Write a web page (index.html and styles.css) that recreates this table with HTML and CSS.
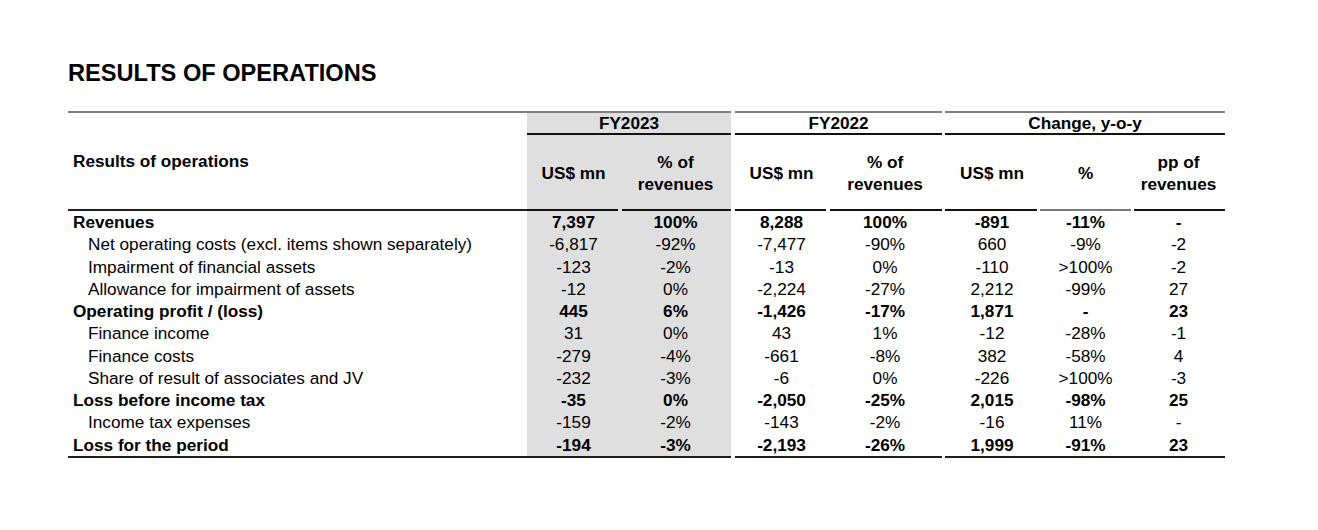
FILE: index.html
```html
<!DOCTYPE html>
<html lang="en">
<head>
<meta charset="utf-8">
<title>Results of operations</title>
<link rel="stylesheet" href="styles.css">
</head>
<body>
<main class="page">
  <h1 class="title">RESULTS OF OPERATIONS</h1>
  <table class="ops">
    <colgroup>
      <col class="w-label">
      <col class="w-93">
      <col class="w-111">
      <col class="w-4">
      <col class="w-93">
      <col class="w-114">
      <col class="w-3">
      <col class="w-94">
      <col class="w-93">
      <col class="w-93">
    </colgroup>
    <thead>
      <tr class="row-group">
        <th class="label-head" rowspan="2">Results of operations</th>
        <th class="group shade" colspan="2">FY2023</th>
        <th class="spacer" rowspan="2"></th>
        <th class="group" colspan="2">FY2022</th>
        <th class="spacer" rowspan="2"></th>
        <th class="group" colspan="3">Change, y-o-y</th>
      </tr>
      <tr class="row-sub">
        <th class="sub first shade">US$ mn</th>
        <th class="sub shade">% of<br>revenues</th>
        <th class="sub first">US$ mn</th>
        <th class="sub">% of<br>revenues</th>
        <th class="sub first">US$ mn</th>
        <th class="sub mid">%</th>
        <th class="sub">pp of<br>revenues</th>
      </tr>
    </thead>
    <tbody>
      <tr class="strong">
        <td class="label">Revenues</td>
        <td class="num shade">7,397</td><td class="num shade">100%</td><td class="spacer"></td>
        <td class="num">8,288</td><td class="num">100%</td><td class="spacer"></td>
        <td class="num">-891</td><td class="num">-11%</td><td class="num">-</td>
      </tr>
      <tr>
        <td class="label indent">Net operating costs (excl. items shown separately)</td>
        <td class="num shade">-6,817</td><td class="num shade">-92%</td><td class="spacer"></td>
        <td class="num">-7,477</td><td class="num">-90%</td><td class="spacer"></td>
        <td class="num">660</td><td class="num">-9%</td><td class="num">-2</td>
      </tr>
      <tr>
        <td class="label indent">Impairment of financial assets</td>
        <td class="num shade">-123</td><td class="num shade">-2%</td><td class="spacer"></td>
        <td class="num">-13</td><td class="num">0%</td><td class="spacer"></td>
        <td class="num">-110</td><td class="num">&gt;100%</td><td class="num">-2</td>
      </tr>
      <tr>
        <td class="label indent">Allowance for impairment of assets</td>
        <td class="num shade">-12</td><td class="num shade">0%</td><td class="spacer"></td>
        <td class="num">-2,224</td><td class="num">-27%</td><td class="spacer"></td>
        <td class="num">2,212</td><td class="num">-99%</td><td class="num">27</td>
      </tr>
      <tr class="strong">
        <td class="label">Operating profit / (loss)</td>
        <td class="num shade">445</td><td class="num shade">6%</td><td class="spacer"></td>
        <td class="num">-1,426</td><td class="num">-17%</td><td class="spacer"></td>
        <td class="num">1,871</td><td class="num">-</td><td class="num">23</td>
      </tr>
      <tr>
        <td class="label indent">Finance income</td>
        <td class="num shade">31</td><td class="num shade">0%</td><td class="spacer"></td>
        <td class="num">43</td><td class="num">1%</td><td class="spacer"></td>
        <td class="num">-12</td><td class="num">-28%</td><td class="num">-1</td>
      </tr>
      <tr>
        <td class="label indent">Finance costs</td>
        <td class="num shade">-279</td><td class="num shade">-4%</td><td class="spacer"></td>
        <td class="num">-661</td><td class="num">-8%</td><td class="spacer"></td>
        <td class="num">382</td><td class="num">-58%</td><td class="num">4</td>
      </tr>
      <tr>
        <td class="label indent">Share of result of associates and JV</td>
        <td class="num shade">-232</td><td class="num shade">-3%</td><td class="spacer"></td>
        <td class="num">-6</td><td class="num">0%</td><td class="spacer"></td>
        <td class="num">-226</td><td class="num">&gt;100%</td><td class="num">-3</td>
      </tr>
      <tr class="strong">
        <td class="label">Loss before income tax</td>
        <td class="num shade">-35</td><td class="num shade">0%</td><td class="spacer"></td>
        <td class="num">-2,050</td><td class="num">-25%</td><td class="spacer"></td>
        <td class="num">2,015</td><td class="num">-98%</td><td class="num">25</td>
      </tr>
      <tr>
        <td class="label indent">Income tax expenses</td>
        <td class="num shade">-159</td><td class="num shade">-2%</td><td class="spacer"></td>
        <td class="num">-143</td><td class="num">-2%</td><td class="spacer"></td>
        <td class="num">-16</td><td class="num">11%</td><td class="num">-</td>
      </tr>
      <tr class="strong last">
        <td class="label">Loss for the period</td>
        <td class="num shade">-194</td><td class="num shade">-3%</td><td class="spacer"></td>
        <td class="num">-2,193</td><td class="num">-26%</td><td class="spacer"></td>
        <td class="num">1,999</td><td class="num">-91%</td><td class="num">23</td>
      </tr>
    </tbody>
  </table>
</main>
</body>
</html>
```

FILE: styles.css
```css
html, body {
  margin: 0;
  background: #ffffff;
}

body {
  font-family: "Liberation Sans", Arial, sans-serif;
  color: #000000;
}

.page {
  padding: 60px 0 0 68px;
}

.title {
  margin: 0 0 25px 0;
  font-size: 23.6px;
  line-height: 26px;
  font-weight: 700;
}

.ops {
  border-collapse: separate;
  border-spacing: 0;
  table-layout: fixed;
  width: 1157px;
  font-size: 17.2px;
}

.w-label { width: 459px; }
.w-93 { width: 93px; }
.w-111 { width: 111px; }
.w-114 { width: 114px; }
.w-94 { width: 94px; }
.w-4 { width: 4px; }
.w-3 { width: 3px; }

.ops th,
.ops td {
  padding: 0;
  font-weight: 400;
}

.ops th {
  font-weight: 700;
}

.shade {
  background-color: #dfdfdf;
}

.label-head {
  text-align: left;
  padding-left: 5px !important;
  vertical-align: middle;
  border-top: 2px solid #7f7f7f;
  border-bottom: 2px solid #1e1e1e;
}

.group {
  text-align: center;
  line-height: 20px;
  border-top: 2px solid #7f7f7f;
  border-bottom: 2px solid #111111;
}

.sub {
  box-sizing: border-box;
  height: 76px;
  line-height: 22px;
  text-align: center;
  vertical-align: middle;
  background-image: linear-gradient(#111111, #111111);
  background-repeat: no-repeat;
  background-size: calc(100% - 2px) 2px;
  background-position: right bottom;
}

.sub.first {
  background-position: left bottom;
}

.sub.mid {
  background-image: linear-gradient(#7a7a7a, #7a7a7a);
  background-size: calc(100% - 2px) 2px;
  background-position: center bottom;
}

.ops tbody td {
  line-height: 22.27px;
  white-space: nowrap;
}

.label {
  text-align: left;
  padding-left: 5px !important;
}

.label.indent {
  padding-left: 20px !important;
}

.num {
  text-align: center;
}

.strong td {
  font-weight: 700;
}

.last td:not(.spacer) {
  border-bottom: 2px solid #1e1e1e;
}
```
